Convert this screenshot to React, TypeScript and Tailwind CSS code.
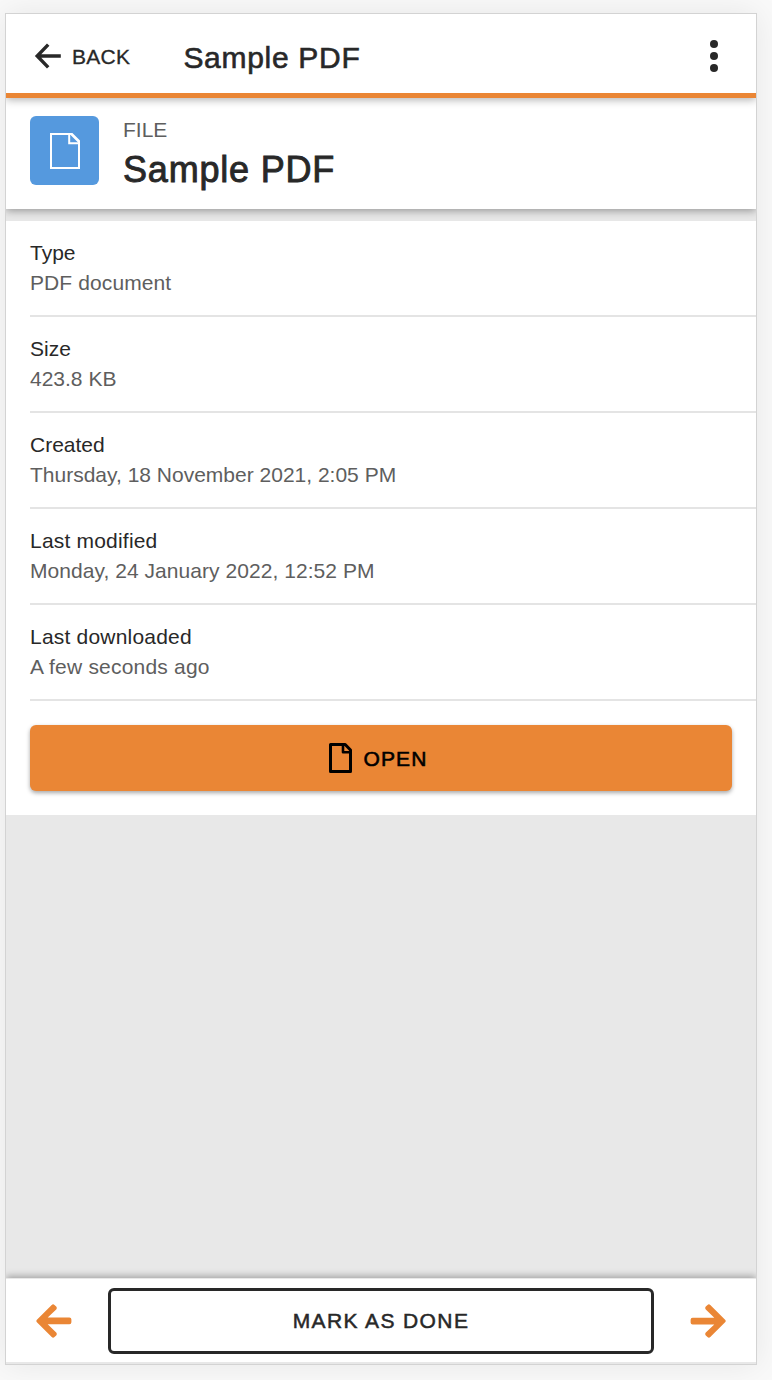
import type { SVGProps } from 'react';

type Detail = {
  label: string;
  value: string;
  // Small per-row letter spacing on the label and value
  labelClass?: string;
  valueClass?: string;
};

const details: Detail[] = [
  { label: 'Type', value: 'PDF document', valueClass: 'tracking-[0.1px]' },
  { label: 'Size', value: '423.8 KB' },
  { label: 'Created', value: 'Thursday, 18 November 2021, 2:05 PM' },
  {
    label: 'Last modified',
    value: 'Monday, 24 January 2022, 12:52 PM',
    labelClass: 'tracking-[0.2px]',
    valueClass: 'tracking-[0.05px]',
  },
  {
    label: 'Last downloaded',
    value: 'A few seconds ago',
    labelClass: 'tracking-[0.2px]',
    valueClass: 'tracking-[0.2px]',
  },
];

const BackIcon = (props: SVGProps<SVGSVGElement>) => (
  <svg viewBox="0 0 28 26" fill="none" stroke="currentColor" strokeWidth="3.4" {...props}>
    <path d="M14.2 1.6 3.2 13l11 11.4M3.2 13H26.8" />
  </svg>
);

const FileIcon = (props: SVGProps<SVGSVGElement>) => (
  <svg viewBox="0 0 30 36" fill="none" stroke="currentColor" strokeWidth="2" {...props}>
    <path d="M1 1h21l7 7v27H1zM19.2 1v9.3H29" />
    <path d="m21.5 1.5 7 7" />
  </svg>
);

const FileBoldIcon = (props: SVGProps<SVGSVGElement>) => (
  <svg viewBox="0 0 23 30" fill="none" stroke="currentColor" strokeLinejoin="round" {...props}>
    <path strokeWidth="3" d="M1.5 1.5h14.7l5.3 5.5v21.5h-20z" />
    <path strokeWidth="2.6" d="M14 2v7.2h7.2" />
  </svg>
);

// Filled arrow with rounded ends, points left
const NavArrow = (props: SVGProps<SVGSVGElement>) => (
  <svg viewBox="0 0 36 34" fill="currentColor" {...props}>
    <path d="M.9 15.7 15.7.9q1.4-1.2 2.8 0l1.7 1.7q1.2 1.4 0 2.8l-8.5 8.2H33.4q2 0 2 2v2.6q0 2-2 2H11.7l8.5 8.4q1.2 1.4 0 2.8l-1.7 1.7q-1.4 1.2-2.8 0L.9 18.2q-1.2-1.2 0-2.5z" />
  </svg>
);

const Header = () => (
  <header className="relative z-20 flex h-[84px] shrink-0 items-center border-b-[5px] border-[#ea8635] bg-white pl-7 pr-[38px] shadow-[0_2px_8px_rgba(0,0,0,0.3)]">
    <button className="flex items-center">
      <BackIcon className="mt-1 h-[26px] w-7" />
      <span className="ml-2.5 mt-1.5 text-[21px] leading-6 tracking-[0.3px] [-webkit-text-stroke:0.3px]">BACK</span>
    </button>
    <h1 className="ml-[53px] mt-[9px] text-[30px] leading-9 tracking-[0.7px] [-webkit-text-stroke:0.6px]">
      Sample PDF
    </h1>
    <button className="ml-auto mt-[5px] flex flex-col gap-1">
      <span className="size-2 rounded-full bg-[#282828]" />
      <span className="size-2 rounded-full bg-[#282828]" />
      <span className="size-2 rounded-full bg-[#282828]" />
    </button>
  </header>
);

const FileHeading = () => (
  <section className="relative z-10 flex h-[111px] shrink-0 bg-white pl-6 pt-[18px] shadow-[0_2px_8px_rgba(0,0,0,0.35)]">
    <div className="flex size-[69px] items-center justify-center rounded-[6px] bg-[#5599de] text-white">
      <FileIcon className="h-9 w-[30px]" />
    </div>
    <div className="ml-6 pt-0.5">
      <p className="text-[21px] leading-6 text-[#5e5e5e]">FILE</p>
      <h2 className="mt-2 text-[36px] leading-10 tracking-[0.8px] [-webkit-text-stroke:0.9px]">Sample PDF</h2>
    </div>
  </section>
);

const DetailRow = ({ label, value, labelClass, valueClass }: Detail) => (
  <div className="h-24 border-b-2 border-[#e4e4e4] pt-[17px] text-[21px] leading-[30px]">
    <dt className={labelClass}>{label}</dt>
    <dd className="text-[#5e5e5e]">
      <span className={valueClass}>{value}</span>
    </dd>
  </div>
);

const Footer = () => (
  <footer className="relative z-10 flex h-[86px] shrink-0 items-center border-b-2 border-t border-[#e8e8e8] bg-white px-[30px] shadow-[0_-2px_7px_rgba(0,0,0,0.3)]">
    <button>
      <NavArrow className="h-[34px] w-9 text-[#ea8635]" />
    </button>
    <button className="mx-9 h-[66px] flex-1 rounded-[6px] border-3 border-[#282828] text-[21px] tracking-[1.4px] [-webkit-text-stroke:0.5px]">
      MARK AS DONE
    </button>
    <button>
      <NavArrow className="h-[34px] w-9 rotate-180 text-[#ea8635]" />
    </button>
  </footer>
);

export default function App() {
  return (
    <div className="h-[1380px] overflow-hidden bg-[#f9f9f9] pl-[5px] pt-[13px] font-['Liberation_Sans',Arial,sans-serif] text-[#282828]">
      <div className="h-[1352px] w-[752px] border border-[#d3d3d3] shadow-[0_0_30px_rgba(0,0,0,0.08)]">
        <div className="flex h-full flex-col overflow-hidden bg-[#e8e8e8]">
          <Header />
          <FileHeading />
          <main className="mt-3 flex-1">
            <div className="bg-white pb-6 pl-6">
              <dl>
                {details.map((detail) => (
                  <DetailRow key={detail.label} {...detail} />
                ))}
              </dl>
              <button className="mt-6 flex h-[66px] w-[702px] items-center justify-center rounded-[6px] bg-[#ea8635] pr-1.5 text-black shadow-[0_2px_4px_rgba(0,0,0,0.35)]">
                <FileBoldIcon className="h-[30px] w-[23px]" />
                <span className="ml-3 mt-px text-[21px] tracking-[1.1px] [-webkit-text-stroke:0.6px]">OPEN</span>
              </button>
            </div>
          </main>
          <Footer />
        </div>
      </div>
    </div>
  );
}
